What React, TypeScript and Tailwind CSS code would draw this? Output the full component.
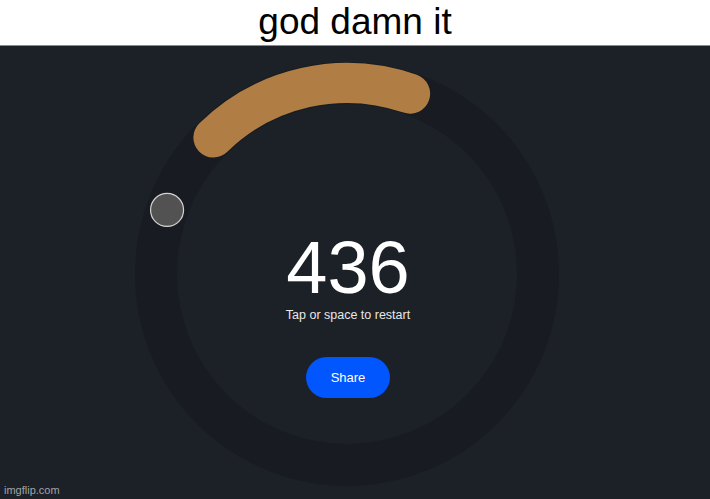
import React from "react";

const CX = 347;
const CY = 228;
const R = 191;

function polar(deg: number) {
  const a = (deg * Math.PI) / 180;
  return [CX + R * Math.cos(a), CY + R * Math.sin(a)];
}

function arcPath(from: number, to: number) {
  const [x1, y1] = polar(from);
  const [x2, y2] = polar(to);
  const large = to - from > 180 ? 1 : 0;
  return `M ${x1} ${y1} A ${R} ${R} 0 ${large} 1 ${x2} ${y2}`;
}

function Gauge() {
  const [dx, dy] = polar(-160.4);
  return (
    <svg className="absolute inset-0" width="710" height="453" viewBox="0 0 710 453">
      <circle cx={CX} cy={CY} r={R} fill="none" stroke="#181c22" strokeWidth="42" />
      <path d={arcPath(-134.4, -70.7)} fill="none" stroke="#b07d44" strokeWidth="40" strokeLinecap="round" />
      <circle cx={dx} cy={dy} r="16.5" fill="#525252" stroke="#d4d4d4" strokeWidth="1.2" />
    </svg>
  );
}

export default function App() {
  return (
    <div className="w-[710px] h-[499px] flex flex-col overflow-hidden bg-[#1c2027]" style={{ fontFamily: '"Liberation Sans", Arial, sans-serif' }}>
      <div className="h-[46px] shrink-0 bg-white border-b border-[#8a8a8a] flex items-center justify-center">
        <span className="text-[37px] leading-none text-black -mt-[2px]">god damn it</span>
      </div>
      <div className="relative flex-1">
        <Gauge />
        <div className="relative flex flex-col items-center pt-[185px] pr-[14px]">
          <div className="text-[74px] leading-[74px] text-white">436</div>
          <div className="mt-[2px] text-[12.5px] leading-[16px] text-[#e8e8e8]">Tap or space to restart</div>
          <button className="mt-[34px] w-[84px] h-[41px] rounded-full bg-[#0256fd] text-white text-[13px] leading-none">Share</button>
        </div>
        <div className="absolute left-[4px] bottom-[3px] text-[11px] leading-none text-[#a0a4aa]">imgflip.com</div>
      </div>
    </div>
  );
}
